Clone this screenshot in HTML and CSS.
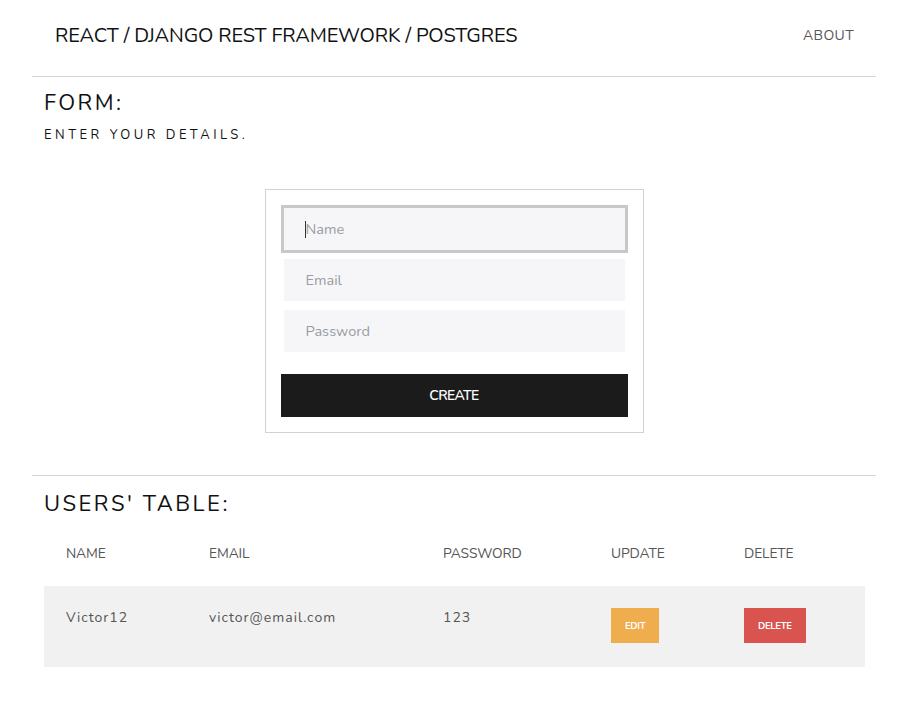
FILE: index.html
```html
<!DOCTYPE html>
<html lang="en">
<head>
<meta charset="utf-8">
<title>React / Django Rest Framework / Postgres</title>
<link rel="stylesheet" href="styles.css">
</head>
<body>
<div class="container">
  <nav class="navbar">
    <span class="brand">REACT / DJANGO REST FRAMEWORK / POSTGRES</span>
    <a class="nav-link" href="#">ABOUT</a>
  </nav>
  <hr class="rule">
  <section class="form-section">
    <h2 class="section-title">FORM:</h2>
    <p class="subtitle">ENTER YOUR DETAILS.</p>
    <div class="form-wrap">
      <form class="card">
        <div class="field-wrap focused">
          <span class="caret"></span>
          <input class="field" type="text" placeholder="Name">
        </div>
        <input class="field" type="email" placeholder="Email">
        <input class="field" type="password" placeholder="Password">
        <button class="create-btn" type="button">CREATE</button>
      </form>
    </div>
  </section>
  <hr class="rule">
  <section class="table-section">
    <h2 class="section-title">USERS' TABLE:</h2>
    <table class="users">
      <colgroup>
        <col class="c1"><col class="c2"><col class="c3"><col class="c4"><col class="c5">
      </colgroup>
      <thead>
        <tr><th>NAME</th><th>EMAIL</th><th>PASSWORD</th><th>UPDATE</th><th>DELETE</th></tr>
      </thead>
      <tbody>
        <tr>
          <td>Victor12</td>
          <td>victor@email.com</td>
          <td>123</td>
          <td><button class="btn-sm edit" type="button">EDIT</button></td>
          <td><button class="btn-sm delete" type="button">DELETE</button></td>
        </tr>
      </tbody>
    </table>
  </section>
</div>
</body>
</html>
```

FILE: styles.css
```css
html, body {
  margin: 0;
  padding: 0;
  background: #fff;
}
body {
  font-family: "Nunito", "Lato", "Noto Sans", sans-serif;
  color: #1a1a1a;
}
.container {
  width: 844px;
  margin: 0 34px 0 32px;
}
.navbar {
  display: flex;
  justify-content: space-between;
  align-items: flex-start;
  height: 76px;
  box-sizing: border-box;
  padding: 22px 22px 0 23px;
}
.brand {
  font-size: 20px;
  color: #111;
  letter-spacing: -0.15px;
}
.nav-link {
  margin-top: 4px;
  font-size: 14px;
  color: #555;
  text-decoration: none;
  letter-spacing: 0.4px;
}
.rule {
  margin: 0;
  border: 0;
  border-top: 1px solid #d6d6d6;
}
.form-section {
  padding: 12px 12px 42px;
}
.section-title {
  margin: 0;
  font-size: 22px;
  font-weight: 400;
  letter-spacing: 2.5px;
  line-height: 28px;
  color: #111;
}
.subtitle {
  margin: 9px 0 0;
  font-size: 13px;
  letter-spacing: 3.5px;
  line-height: 18px;
  color: #111;
}
.form-wrap {
  display: flex;
  justify-content: center;
  margin-top: 45px;
}
.card {
  width: 347px;
  padding: 15px;
  border: 1px solid #d2d2d2;
  display: flex;
  flex-direction: column;
}
.field {
  margin: 3px 3px 6px;
  height: 42px;
  box-sizing: border-box;
  border: 0;
  background: #f6f6f8;
  padding: 0 22px;
  font-family: inherit;
  font-size: 14.6px;
  color: #333;
  outline: none;
}
.field::placeholder {
  color: #9a9ca3;
}
.field-wrap {
  position: relative;
  display: flex;
  flex-direction: column;
}
.field-wrap.focused .field {
  outline: 3px solid #c8c8c8;
}
.caret {
  position: absolute;
  left: 24px;
  top: 16px;
  width: 1px;
  height: 17px;
  background: #333;
  z-index: 1;
}
.create-btn {
  margin-top: 16px;
  height: 43px;
  border: 0;
  background: #1b1b1b;
  color: #fff;
  font-family: inherit;
  font-size: 14px;
  font-weight: 600;
  letter-spacing: -0.6px;
  cursor: pointer;
}
.table-section {
  padding: 14px 11px 40px 12px;
}
.users {
  margin-top: 4px;
  width: 821px;
  border-collapse: collapse;
  table-layout: fixed;
}
.c1 { width: 143px; }
.c2 { width: 234px; }
.c3 { width: 168px; }
.c4 { width: 133px; }
.c5 { width: 143px; }
.users th, .users td {
  text-align: left;
  vertical-align: top;
  padding: 22px 22px 23px;
  font-size: 14px;
  line-height: 20px;
  color: #555;
}
.users th {
  font-weight: 400;
  font-size: 13.8px;
  letter-spacing: -0.1px;
  padding-bottom: 22px;
}
.users tbody tr {
  background: #f1f1f1;
}
.users td {
  letter-spacing: 1px;
  height: 35px;
  padding-bottom: 24px;
}
.btn-sm {
  height: 35px;
  border: 0;
  color: #fff;
  font-family: inherit;
  font-size: 9.5px;
  font-weight: 700;
  letter-spacing: -0.3px;
  padding: 0 14px;
  cursor: pointer;
}
.edit { background: #f0ad4e; }
.delete { background: #d9534f; }
```
